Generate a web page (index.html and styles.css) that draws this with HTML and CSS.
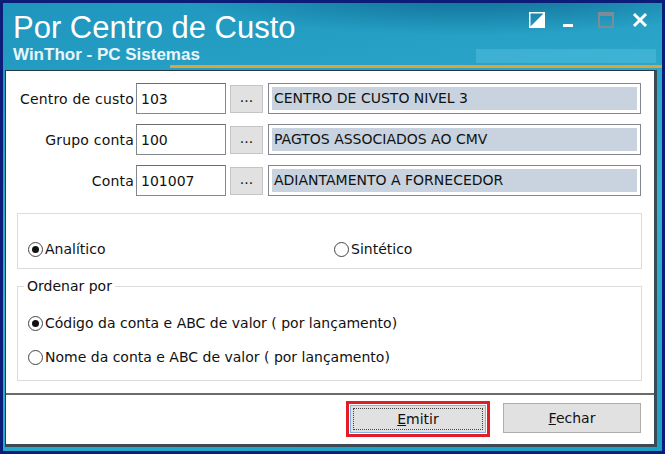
FILE: index.html
```html
<!DOCTYPE html>
<html>
<head>
<meta charset="utf-8">
<link rel="stylesheet" href="styles.css">
</head>
<body>
<div class="window">
  <div class="header">
    <div class="titles">
      <div class="title">Por Centro de Custo</div>
      <div class="subtitle">WinThor - PC Sistemas</div>
    </div>
    <div class="controls">
      <svg class="ctl c1" width="16" height="16" viewBox="0 0 16 16"><rect x="0.5" y="0.5" width="15" height="15" fill="none" stroke="#fff" stroke-width="2"/><polygon points="1,15 15,1 15,15" fill="#fff"/></svg>
      <svg class="ctl c2" width="10" height="16" viewBox="0 0 10 16"><rect x="0" y="12" width="10" height="3" fill="#fff"/></svg>
      <svg class="ctl c3" width="16" height="16" viewBox="0 0 16 16"><rect x="1" y="1" width="14" height="14" fill="none" stroke="#7d8c96" stroke-width="2"/><rect x="1" y="1" width="14" height="3" fill="#7d8c96"/></svg>
      <svg class="ctl c4" width="16" height="16" viewBox="0 0 16 16"><path d="M2 2 L14 14 M14 2 L2 14" stroke="#fff" stroke-width="3"/></svg>
    </div>
    <div class="blurbar"></div>
  </div>
  <div class="accent"></div>
  <div class="panel">
    <div class="form">
      <div class="row">
        <label class="lbl">Centro de custo</label>
        <div class="code">103</div>
        <div class="dots">...</div>
        <div class="desc"><span>CENTRO DE CUSTO NIVEL 3</span></div>
      </div>
      <div class="row">
        <label class="lbl">Grupo conta</label>
        <div class="code">100</div>
        <div class="dots">...</div>
        <div class="desc"><span>PAGTOS ASSOCIADOS AO CMV</span></div>
      </div>
      <div class="row">
        <label class="lbl">Conta</label>
        <div class="code">101007</div>
        <div class="dots">...</div>
        <div class="desc"><span>ADIANTAMENTO A FORNECEDOR</span></div>
      </div>
    </div>
    <div class="group g1">
      <div class="opt w1"><span class="radio on"></span>Analítico</div>
      <div class="opt"><span class="radio"></span>Sintético</div>
    </div>
    <div class="group g2">
      <div class="legend">Ordenar por</div>
      <div class="opt"><span class="radio on"></span>Código da conta e ABC de valor ( por lançamento)</div>
      <div class="opt"><span class="radio"></span>Nome da conta e ABC de valor ( por lançamento)</div>
    </div>
    <div class="footer">
      <div class="hl"><div class="btn focus"><span><u>E</u>mitir</span></div></div>
      <div class="btn plain"><span><u>F</u>echar</span></div>
    </div>
  </div>
</div>
</body>
</html>
```
FILE: styles.css
```css
* { box-sizing: border-box; }
html, body { margin: 0; padding: 0; }
body { width: 665px; height: 454px; overflow: hidden; }
.window {
  width: 665px; height: 454px;
  border: 3px solid #0b1d78;
  background:
    radial-gradient(ellipse 420px 60px at 470px -10px, rgba(8,90,130,0.75), rgba(8,90,130,0) 70%),
    linear-gradient(170deg, #1f95bd 0%, #2aa6c9 30%, #33b3d2 55%, #1aa0c6 100%);
  display: flex; flex-direction: column;
  font-family: "DejaVu Sans", sans-serif;
}
.header { position: relative; height: 62px; display: flex; justify-content: space-between; padding: 0 0 0 10px; }
.title { font-family: "Liberation Sans", Arial, sans-serif; font-size: 31px; color: #fff; margin-top: 7px; line-height: 36px; }
.subtitle { font-family: "Liberation Sans", Arial, sans-serif; font-weight: bold; font-size: 17px; color: #e8f6fb; margin-top: 0; line-height: 18px; }
.controls { display: flex; padding: 9px 14px 0 0; height: 30px; align-items: flex-start; }
.controls .ctl { display: block; }
.c2 { margin-left: 18px; }
.c3 { margin-left: 25px; }
.c4 { margin-left: 18px; }
.blurbar { position: absolute; right: 6px; top: 46px; width: 180px; height: 14px; background: rgba(80,190,220,0.55); }
.accent { height: 3px; margin-left: 167px; background: #e2a23a; }
.panel {
  flex: 1; margin: 2px 5px 4px 2px;
  background: #fff;
  border: 1px solid #233746; border-right: 3px solid #3c4a55; border-bottom: 3px solid #3c4a55;
  display: flex; flex-direction: column;
  font-size: 14px; color: #111;
}
.form { padding: 12px 0 0 0; display: flex; flex-direction: column; gap: 10px; }
.row { display: flex; align-items: center; height: 31px; }
.lbl { width: 130px; text-align: right; padding-right: 2px; letter-spacing: 0.2px; }
.code { width: 90px; height: 31px; border: 1px solid #828790; border-top-color: #6d6d6d; padding: 5px 4px; margin-right: 4px; line-height: 20px; }
.dots { width: 33px; height: 28px; background: #e1e1e1; border: 1px solid #c4c4c4; text-align: center; line-height: 22px; margin-right: 5px; }
.desc { width: 373px; height: 31px; border: 1px solid #828790; padding: 3px; display: flex; }
.desc span { flex: 1; background: #c8d3df; padding: 0 2px; line-height: 23px; }
.group { margin: 0 12px 0 11px; border: 1px solid #dcdcdc; }
.g1 { margin-top: 17px; height: 56px; display: flex; align-items: flex-end; padding: 0 0 8px 10px; }
.g1 .w1 { width: 306px; }
.g2 { position: relative; margin-top: 17px; height: 95px; padding: 25px 0 0 10px; display: flex; flex-direction: column; gap: 12px; }
.legend { position: absolute; left: 6px; top: -10px; background: #fff; padding: 0 3px; line-height: 18px; }
.opt { display: flex; align-items: center; line-height: 22px; white-space: nowrap; }
.radio { width: 15px; height: 15px; border: 1px solid #444; border-radius: 50%; margin-right: 2px; position: relative; display: inline-block; flex: none; }
.radio.on::after { content: ""; position: absolute; left: 3px; top: 3px; width: 7px; height: 7px; border-radius: 50%; background: #111; }
.footer { margin-top: 12px; border-top: 2px solid #6b6b6b; flex: 1; display: flex; justify-content: flex-end; align-items: flex-start; padding: 6px 13px 0 0; gap: 13px; }
.hl { border: 3px solid #e41d25; padding: 1px; }
.btn { width: 138px; height: 30px; background: #e1e1e1; border: 1px solid #adadad; display: flex; align-items: center; justify-content: center; }
.btn.plain { margin-top: 2px; }
.hl .btn { width: 136px; height: 28px; border-color: #7eb4ea; position: relative; }
.btn.focus::before { content: ""; position: absolute; inset: 2px; border: 1px dotted #444; }
```
